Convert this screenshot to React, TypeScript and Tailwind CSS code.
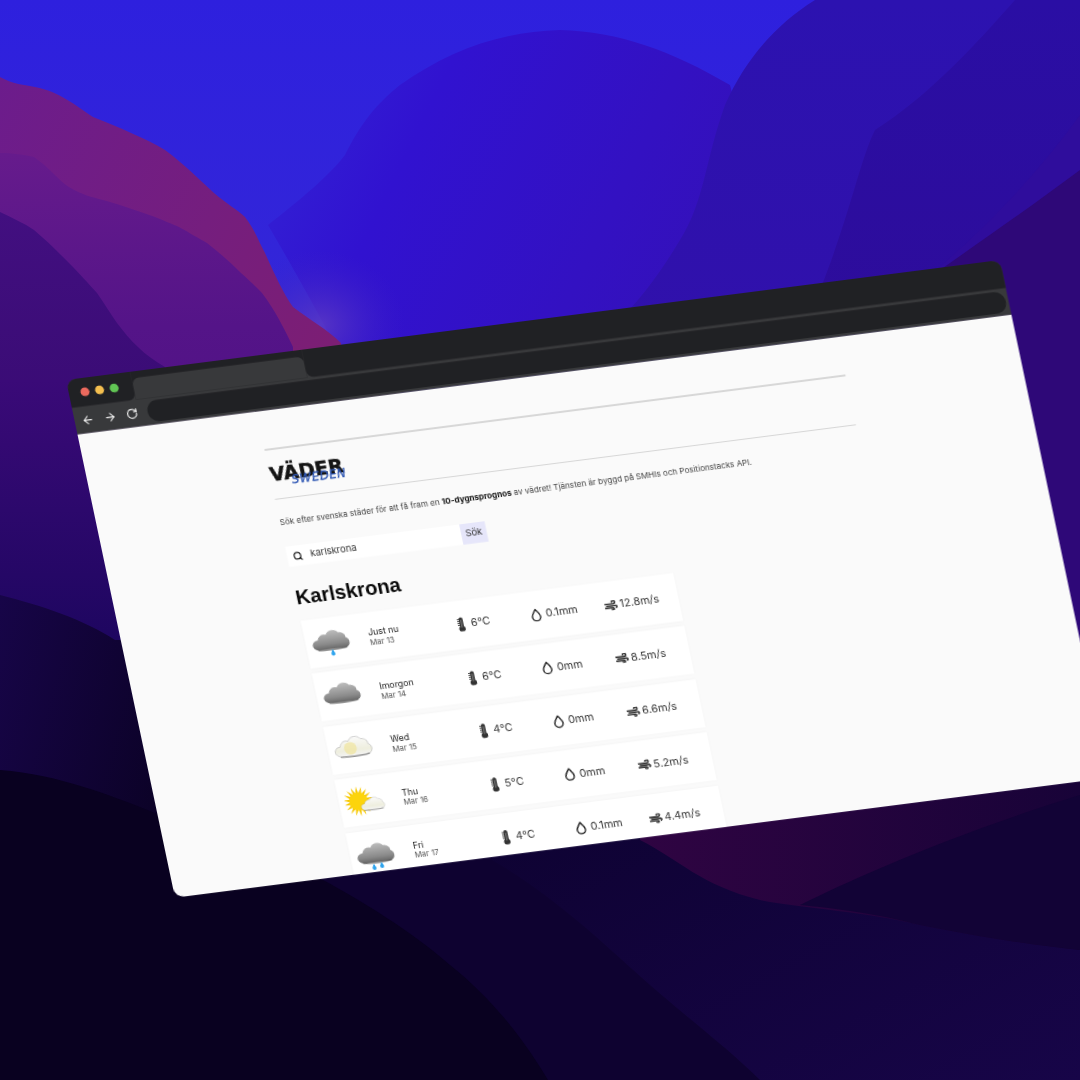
import { ArrowLeft, ArrowRight, RotateCw, Search } from "lucide-react";

interface Day {
  label: string;
  date: string;
  icon: "rain" | "cloud" | "pale" | "sun" | "showers";
  temp: string;
  rain: string;
  wind: string;
}

const days: Day[] = [
  { label: "Just nu", date: "Mar 13", icon: "rain", temp: "6°C", rain: "0.1mm", wind: "12.8m/s" },
  { label: "Imorgon", date: "Mar 14", icon: "cloud", temp: "6°C", rain: "0mm", wind: "8.5m/s" },
  { label: "Wed", date: "Mar 15", icon: "pale", temp: "4°C", rain: "0mm", wind: "6.6m/s" },
  { label: "Thu", date: "Mar 16", icon: "sun", temp: "5°C", rain: "0mm", wind: "5.2m/s" },
  { label: "Fri", date: "Mar 17", icon: "showers", temp: "4°C", rain: "0.1mm", wind: "4.4m/s" },
];

const CLOUD =
  "M9 25C4 25 1 22.500 1 19.500C1 16.500 4 14.500 7 14.500C8 10 12.500 8 16 9.500C18.500 4.500 26 4 29 8.500C33 8.500 36 11 35.500 14.500C38 15.500 39 18 38.500 20.500C37.500 24 34.500 25 31 25Z";

function Wallpaper() {
  return (
    <svg viewBox="0 0 1080 1080" className="absolute inset-0 w-[1080px] h-[1080px]">
      <defs>
        <linearGradient id="sky" x1="0" y1="0" x2="0" y2="1">
          <stop offset="0" stopColor="#2e20de" />
          <stop offset="1" stopColor="#3a2ed0" />
        </linearGradient>
        <linearGradient id="hill" x1="0" y1="0" x2="1" y2="0.6">
          <stop offset="0" stopColor="#6c1c8c" />
          <stop offset="0.6" stopColor="#751e7e" />
          <stop offset="1" stopColor="#7c1e74" />
        </linearGradient>
        <linearGradient id="hill2" x1="0" y1="0" x2="0" y2="1">
          <stop offset="0" stopColor="#661b8c" />
          <stop offset="0.5" stopColor="#541488" />
          <stop offset="1" stopColor="#4e1082" />
        </linearGradient>
        <linearGradient id="hill3" x1="0" y1="0" x2="0" y2="1">
          <stop offset="0" stopColor="#420f80" />
          <stop offset="1" stopColor="#33096c" />
        </linearGradient>
        <linearGradient id="mound" x1="0" y1="0" x2="1" y2="0.4">
          <stop offset="0" stopColor="#3326d6" />
          <stop offset="0.3" stopColor="#3112d0" />
          <stop offset="1" stopColor="#3510b4" />
        </linearGradient>
        <linearGradient id="ridge3" x1="0" y1="0" x2="0" y2="1">
          <stop offset="0" stopColor="#2c12b0" />
          <stop offset="1" stopColor="#360fa4" />
        </linearGradient>
        <linearGradient id="ridge4" x1="0" y1="0" x2="0" y2="1">
          <stop offset="0" stopColor="#2a0ea4" />
          <stop offset="1" stopColor="#320a8e" />
        </linearGradient>
        <linearGradient id="lower" x1="0" y1="0" x2="1" y2="0.2">
          <stop offset="0" stopColor="#170548" />
          <stop offset="0.5" stopColor="#0c0228" />
          <stop offset="1" stopColor="#0a0224" />
        </linearGradient>
        <linearGradient id="left" x1="0" y1="0" x2="0" y2="1">
          <stop offset="0" stopColor="#3a0a78" />
          <stop offset="1" stopColor="#1e0660" />
        </linearGradient>
        <linearGradient id="plum" x1="0" y1="0" x2="1" y2="0">
          <stop offset="0" stopColor="#2f0442" />
          <stop offset="1" stopColor="#180338" />
        </linearGradient>
        <linearGradient id="band" x1="0" y1="0" x2="1" y2="1">
          <stop offset="0" stopColor="#0d0230" />
          <stop offset="1" stopColor="#170548" />
        </linearGradient>
        <radialGradient id="glow" cx="0.5" cy="0.5" r="0.5">
          <stop offset="0" stopColor="#5a38c4" stopOpacity="0.9" />
          <stop offset="1" stopColor="#3a20c8" stopOpacity="0" />
        </radialGradient>
      </defs>
      <rect width="1080" height="700" fill="url(#sky)" />
      <path d="M268 225C300 200 330 175 345 155C360 125 375 105 400 85C450 50 500 32 560 30C620 32 670 50 730 85L840 500L360 400C340 350 300 280 268 225Z" fill="url(#mound)" />
      <ellipse cx="320" cy="325" rx="85" ry="75" fill="url(#glow)" />
      <path d="M815 0C775 25 745 60 725 105C705 160 705 200 680 240C650 290 630 310 600 340L500 420L1080 800L1080 0Z" fill="url(#ridge3)" />
      <path d="M1015 0C975 45 930 95 875 130C860 160 850 215 820 290L800 420L1080 800L1080 0Z" fill="url(#ridge4)" />
      <path d="M1080 115C1040 170 990 225 930 275L900 420L1080 800Z" fill="#2f0d9c" />
      <path d="M1080 170C1040 200 990 235 940 270L920 420L1080 800Z" fill="#2e0878" />
      <path d="M0 77C12 84 25 85 35 87C60 92 75 105 93 117C120 128 145 138 165 150C185 165 200 180 214 193C228 205 238 210 245 217C255 230 258 240 265 253C275 275 283 293 293 307C310 320 328 330 341 343L345 420L0 480Z" fill="url(#hill)" />
      <path d="M0 153C12 153 25 155 34 157C50 168 58 180 69 187C82 195 92 197 103 200C125 206 140 212 155 217C165 221 172 224 179 227C190 233 198 238 207 243C220 253 232 264 241 273C250 281 256 287 262 293C275 310 285 330 293 347L293 420L0 500Z" fill="url(#hill2)" />
      <path d="M0 212C12 218 24 223 34 230C46 240 58 252 69 263C80 274 88 283 97 293C104 303 110 313 117 323C124 332 130 340 138 347C146 355 155 361 165 367L150 420L0 560Z" fill="url(#hill3)" />
      <rect y="380" width="400" height="260" fill="url(#left)" />
      <path d="M0 595C40 605 85 620 115 640L400 640L400 900L0 900Z" fill="url(#lower)" />
      <rect x="160" y="760" width="920" height="320" fill="#0e0230" />
      <path d="M492 760L492 860C560 900 610 950 650 985C690 1020 730 1050 760 1080L1080 1080L1080 760Z" fill="url(#band)" />
      <path d="M640 760L640 840C680 860 700 885 760 900C800 908 870 912 920 925C970 935 1030 945 1080 950L1080 760Z" fill="url(#plum)" />
      <path d="M800 905C850 880 950 835 1080 795L1080 950C1030 945 970 935 920 925C870 912 830 908 800 905Z" fill="#120336" />
      <path d="M0 770C60 775 110 795 160 815L323 880C360 900 410 930 450 965C500 1005 530 1050 548 1080L0 1080Z" fill="#090120" />
    </svg>
  );
}

function Cloud({ id, pale }: { id: string; pale?: boolean }) {
  return (
    <>
      <defs>
        <linearGradient id={id} x1="0" y1="0" x2="0" y2="1">
          <stop offset="0" stopColor={pale ? "#fafafa" : "#bdbdbd"} />
          <stop offset="0.7" stopColor={pale ? "#eeeede" : "#8a8a8a"} />
          <stop offset="1" stopColor={pale ? "#f4f4f4" : "#666666"} />
        </linearGradient>
      </defs>
      <path d={CLOUD} fill={`url(#${id})`} stroke={pale ? "#a4a4a4" : "none"} strokeWidth="0.500" />
      <path d="M6 25C14 26 28 26 35 24.500" fill="none" stroke="#444" strokeWidth="1.200" strokeLinecap="round" opacity="0.55" />
    </>
  );
}

function Drop({ x, y }: { x: number; y: number }) {
  return <path d={`M${x} ${y}c-1.200 2.600-2 3.700-2 4.800a2 2 0 0 0 4 0c0-1.100-.8-2.200-2-4.800Z`} fill="#2ea4ee" />;
}

function Sun({ cx, cy }: { cx: number; cy: number }) {
  const rays = Array.from({ length: 18 }, (_, i) => (i * 360) / 18);
  return (
    <g>
      {rays.map((a) => (
        <path key={a} d={`M${cx - 1.500} ${cy - 8}L${cx} ${cy - 15.500}L${cx + 1.500} ${cy - 8}Z`} fill="#f7c800" transform={`rotate(${a} ${cx} ${cy})`} />
      ))}
      <circle cx={cx} cy={cy} r="9.500" fill="#fcd40c" />
    </g>
  );
}

function WeatherIcon({ kind, id }: { kind: Day["icon"]; id: string }) {
  return (
    <svg viewBox="0 0 40 34" className="w-[40px] h-[34px] shrink-0">
      {kind === "rain" && (
        <>
          <Cloud id={id} />
          <Drop x={20} y={25} />
        </>
      )}
      {kind === "cloud" && <Cloud id={id} />}
      {kind === "pale" && (
        <>
          <Cloud id={id} pale />
          <circle cx="17" cy="17" r="6.500" fill="#f0e49c" opacity="0.7" />
        </>
      )}
      {kind === "sun" && (
        <>
          <Sun cx={14} cy={17} />
          <g transform="translate(15 11) scale(0.64)">
            <Cloud id={id} pale />
          </g>
        </>
      )}
      {kind === "showers" && (
        <>
          <Cloud id={id} />
          <Drop x={16} y={26} />
          <Drop x={24} y={25} />
        </>
      )}
    </svg>
  );
}

function Thermometer() {
  return (
    <svg viewBox="0 0 10 15" className="w-[10px] h-[15px] shrink-0">
      <path d="M3.400 2.400a2 2 0 0 1 4 0v7.300a3.300 3.300 0 1 1-4 0Z" fill="#333" />
      <path d="M1.500 2.500h2M1.500 4.500h2M1.500 6.500h2M1.500 8.500h2" stroke="#333" strokeWidth="0.900" />
      <path d="M5.400 3v8" stroke="#999" strokeWidth="0.800" />
    </svg>
  );
}

function Droplet() {
  return (
    <svg viewBox="0 0 12 14" className="w-[12px] h-[14px] shrink-0" fill="none" stroke="#2b2b2b" strokeWidth="1.500">
      <path d="M6 1.300C4 4.200 1.800 6.300 1.800 8.800a4.200 4.200 0 0 0 8.400 0C10.200 6.300 8 4.200 6 1.300Z" strokeLinejoin="round" />
    </svg>
  );
}

function WindIcon() {
  return (
    <svg viewBox="0 0 14 10" className="w-[14px] h-[10px] shrink-0" fill="none" stroke="#383838" strokeWidth="1.700" strokeLinecap="round">
      <path d="M1 3.500h8.500a1.600 1.600 0 1 0-1.500-2.200" />
      <path d="M2.500 5.500h9.500a1.100 1.100 0 0 1 0 2" />
      <path d="M1 7.500h7.500a1.100 1.100 0 1 1-1 1.700" />
    </svg>
  );
}

function DayRow({ day }: { day: Day }) {
  return (
    <div className="flex items-center h-[50px] bg-white pl-[6px] shadow-[0_0_4px_rgba(0,0,0,0.03)] shrink-0">
      <div className="w-[59px] flex">
        <WeatherIcon kind={day.icon} id={`cloud-${day.date.replace(" ", "")}`} />
      </div>
      <div className="w-[90px] flex flex-col pt-[2px]">
        <span className="text-[9px] leading-[11px] text-[#1a1a1a]">{day.label}</span>
        <span className="text-[8px] leading-[10px] text-[#555]">{day.date}</span>
      </div>
      <div className="w-[76px] flex items-center gap-[5px] text-[11px] text-[#333]">
        <Thermometer />
        {day.temp}
      </div>
      <div className="w-[76px] flex items-center gap-[4px] text-[11px] text-[#333]">
        <Droplet />
        {day.rain}
      </div>
      <div className="flex items-center gap-[2px] text-[11px] text-[#333]">
        <WindIcon />
        {day.wind}
      </div>
    </div>
  );
}

function BrowserChrome() {
  return (
    <div className="h-[57px] flex flex-col bg-[#38393b] shrink-0">
      <div className="h-[29px] flex shrink-0">
        <div className="w-[66px] bg-[#202124] rounded-br-[7px] flex items-center gap-[6px] pl-[12px]">
          <span className="w-[9px] h-[9px] rounded-full bg-[#ec6a5e]" />
          <span className="w-[9px] h-[9px] rounded-full bg-[#f4bf4f]" />
          <span className="w-[9px] h-[9px] rounded-full bg-[#61c554]" />
        </div>
        <div className="w-[176px] bg-[#202124]">
          <div className="mt-[6.500px] h-[22.500px] bg-[#38393b] rounded-t-[7px]" />
        </div>
        <div className="flex-1 bg-[#202124] rounded-bl-[7px]" />
      </div>
      <div className="flex-1 flex items-center pl-[6.500px] pr-[3px] text-[#f0f0f0]">
        <div className="flex items-center gap-[10px] w-[68px]">
          <ArrowLeft className="w-[13px] h-[13px]" />
          <ArrowRight className="w-[13px] h-[13px]" />
          <RotateCw className="w-[12px] h-[12px]" strokeWidth={2.500} />
        </div>
        <div className="flex-1 h-[22px] rounded-full bg-[#202124]" />
      </div>
    </div>
  );
}

export default function App() {
  return (
    <div className="relative w-[1080px] h-[1080px] overflow-hidden bg-[#08011c] font-['Inter',sans-serif]">
      <Wallpaper />
      <div className="absolute left-[66px] top-[380px] w-[960px] h-[540px] flex flex-col rounded-[10px] overflow-hidden origin-top-left [transform:matrix(0.973,-0.125,0.2019,0.959,0,0)] blur-[0.4px]">
        <BrowserChrome />
        <div className="flex-1 bg-[#fafafa] pl-[184px] overflow-hidden">
          <div className="w-[597px] pt-[39px] flex flex-col">
            <div className="h-[1.500px] bg-[#d6d6d6]" />
            <div className="relative h-[50px] flex items-center">
              <span className="text-[20px] font-bold leading-none text-[#151515] [-webkit-text-stroke:0.5px_#151515] font-['DejaVu_Sans',sans-serif]">VÄDER</span>
              <span className="absolute left-[21px] top-[27px] text-[12px] italic leading-none tracking-[0.5px] text-[#2f57b4] [-webkit-text-stroke:0.3px_#2f57b4] font-['DejaVu_Sans',sans-serif]">SWEDEN</span>
            </div>
            <div className="h-[1.500px] bg-[#d6d6d6]" />
            <p className="mt-[17px] text-[8.260px] leading-[12px] text-[#444] whitespace-nowrap">
              Sök efter svenska städer för att få fram en <b className="font-bold text-[#111]">10-dygnsprognos</b> av vädret! Tjänsten är byggd på SMHIs och Positionstacks API.
            </p>
            <div className="mt-[20px] flex h-[21px] w-[205px] text-[9.600px] text-[#333]">
              <div className="w-[179px] bg-white flex items-center gap-[8px] pl-[6px]">
                <Search className="w-[10px] h-[10px] text-[#222]" strokeWidth={3} />
                karlskrona
              </div>
              <div className="flex-1 bg-[#e6e6fa] flex items-center justify-center">Sök</div>
            </div>
            <h1 className="mt-[19px] text-[20.600px] leading-[26px] font-bold text-[#0a0a0a] font-['Liberation_Sans',sans-serif]">Karlskrona</h1>
            <div className="mt-[10.500px] w-[383px] flex flex-col gap-[5.500px]">
              {days.map((d) => (
                <DayRow key={d.date} day={d} />
              ))}
            </div>
          </div>
        </div>
      </div>
    </div>
  );
}
